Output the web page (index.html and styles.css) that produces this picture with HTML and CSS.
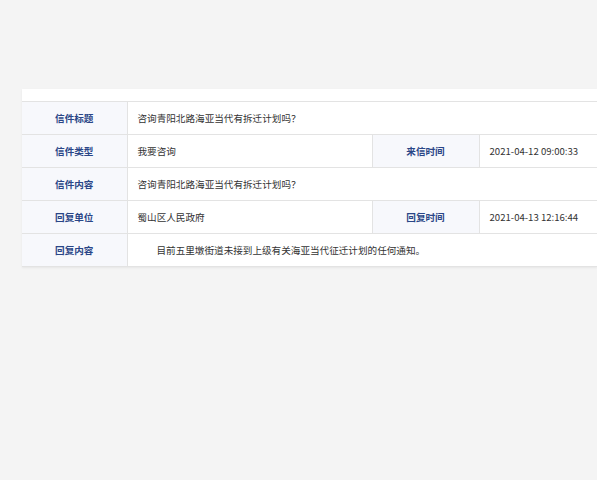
FILE: index.html
```html
<!DOCTYPE html>
<html lang="zh">
<head>
<meta charset="utf-8">
<link rel="stylesheet" href="styles.css">
</head>
<body>
<div class="page">
  <div class="panel">
    <table class="info">
      <colgroup>
        <col class="c-label"><col class="c-val"><col class="c-label2"><col class="c-val2">
      </colgroup>
      <tr>
        <th>信件标题</th>
        <td colspan="3">咨询青阳北路海亚当代有拆迁计划吗？</td>
      </tr>
      <tr>
        <th>信件类型</th>
        <td>我要咨询</td>
        <th>来信时间</th>
        <td>2021-04-12 09:00:33</td>
      </tr>
      <tr>
        <th>信件内容</th>
        <td colspan="3">咨询青阳北路海亚当代有拆迁计划吗？</td>
      </tr>
      <tr>
        <th>回复单位</th>
        <td>蜀山区人民政府</td>
        <th>回复时间</th>
        <td>2021-04-13 12:16:44</td>
      </tr>
      <tr>
        <th>回复内容</th>
        <td colspan="3" class="reply">目前五里墩街道未接到上级有关海亚当代征迁计划的任何通知。</td>
      </tr>
    </table>
  </div>
</div>
</body>
</html>
```

FILE: styles.css
```css
html, body {
  margin: 0;
  padding: 0;
  background: #f4f4f4;
  overflow: hidden;
}
body {
  width: 597px;
  height: 480px;
  font-family: "Noto Sans CJK SC", "Noto Sans", sans-serif;
}
.page {
  padding: 89px 0 0 22px;
}
.panel {
  width: 575px;
  background: #fff;
  padding-top: 12px;
  box-shadow: 0 1px 2px rgba(0,0,0,0.06);
}
.info {
  width: 575px;
  border-collapse: collapse;
  table-layout: fixed;
  font-size: 9.6px;
}
.c-label { width: 105px; }
.c-val { width: 245px; }
.c-label2 { width: 107px; }
.c-val2 { width: auto; }
.info tr {
  height: 33px;
}
.info th, .info td {
  border-top: 1px solid #e3e3e3;
  border-bottom: 1px solid #e3e3e3;
  padding: 0 10px;
  line-height: 14px;
  text-align: left;
  white-space: nowrap;
}
.info th {
  background: #f7f8fc;
  color: #2a4687;
  font-weight: 700;
  text-align: center;
  border-right: 1px solid #e3e3e3;
}
.info td {
  color: #333;
  font-weight: 400;
}
.info td + th {
  border-left: 1px solid #e3e3e3;
}
.info .reply {
  text-indent: 19px;
}
```
